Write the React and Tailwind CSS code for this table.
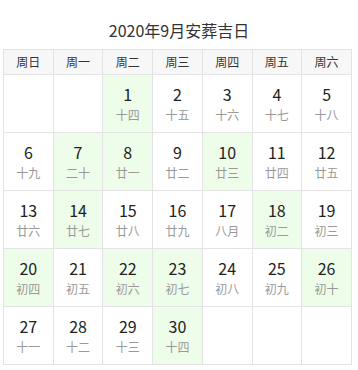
const weekdays = ["周日", "周一", "周二", "周三", "周四", "周五", "周六"]

const lunar = [
    "十四", "十五", "十六", "十七", "十八", "十九", "二十", "廿一", "廿二", "廿三",
    "廿四", "廿五", "廿六", "廿七", "廿八", "廿九", "八月", "初二", "初三", "初四",
    "初五", "初六", "初七", "初八", "初九", "初十", "十一", "十二", "十三", "十四"
]

// good days for the month
const goodDays = [1, 7, 8, 10, 14, 18, 20, 22, 23, 26, 30]

export default function App() {

    const cells = [null, null]
    for (let d = 1; d <= 30; d++) cells.push(d)
    while (cells.length % 7 !== 0) cells.push(null)

    const rows = []
    for (let i = 0; i < cells.length; i += 7) rows.push(cells.slice(i, i + 7))

    return (
        <div className="w-[358px] h-[370px] bg-white font-['Noto_Sans_CJK_SC',sans-serif]">

            <h1 className="pt-[20px] text-center text-[16px] leading-[20px] text-[#333] font-normal">
                2020年9月安葬吉日
            </h1>

            <table className="mt-[9px] ml-[3px] w-[349px] border-collapse table-fixed">
                <thead>
                    <tr>
                        {weekdays.map((w) => (
                            <th
                                key={w}
                                className="h-[25px] border border-[#e3e3e3] bg-[#f7f7f7] text-[12px] font-normal text-[#333] p-0"
                            >
                                {w}
                            </th>
                        ))}
                    </tr>
                </thead>
                <tbody>
                    {rows.map((row, ri) => (
                        <tr key={ri}>
                            {row.map((d, ci) => (
                                <td
                                    key={ci}
                                    className={
                                        "h-[58px] border border-[#e3e3e3] text-center align-middle p-0 " +
                                        (d && goodDays.includes(d) ? "bg-[#edfdea]" : "bg-white")
                                    }
                                >
                                    {d && (
                                        <div className="flex flex-col items-center">
                                            <span className="text-[16px] leading-[20px] text-[#222]">{d}</span>
                                            <span className="mt-[3px] text-[12px] leading-[16px] text-[#999]">
                                                {lunar[d - 1]}
                                            </span>
                                        </div>
                                    )}
                                </td>
                            ))}
                        </tr>
                    ))}
                </tbody>
            </table>

        </div>
    )
}
